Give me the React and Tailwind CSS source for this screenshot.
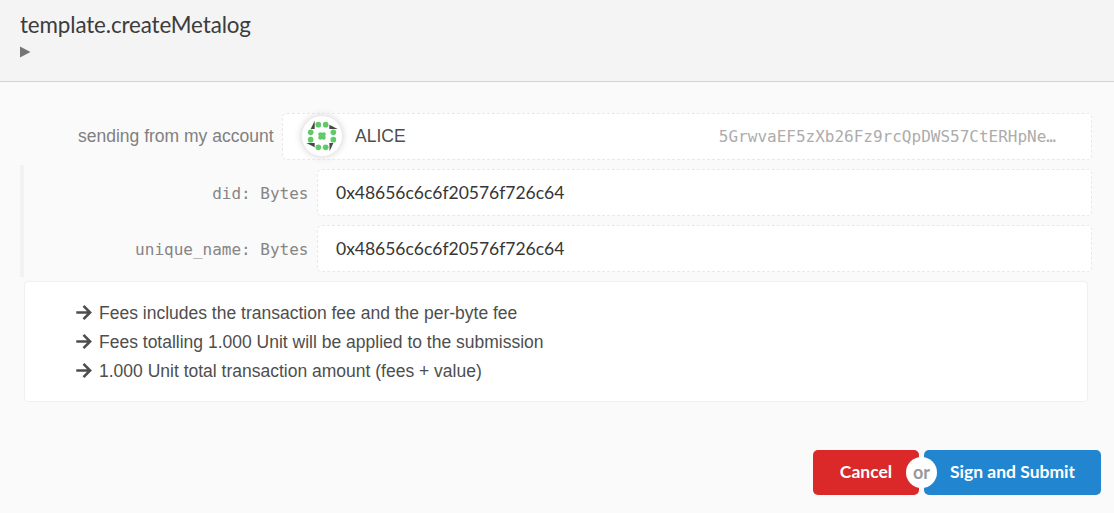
const RING = [[67, 41], [89, 41], [44, 64], [112, 64], [44, 86], [112, 86], [67, 109], [89, 109]];
const CORE = [[73, 70], [83, 70], [73, 80], [83, 80]];

function Identicon() {
  return (
    <div className="mb-px h-10 w-10 shrink-0 rounded-full bg-white shadow-[0_0_6px_2px_#dfdfdf]">
      <svg className="block h-10 w-10" viewBox="18 15 120 120">
        <g fill="#484848">
          <path d="M56 29V54H44Z" />
          <path d="M100 41L125 54H100Z" />
          <path d="M100 96H112L101 121Z" />
          <path d="M31 96H56V109Z" />
        </g>
        <g fill="#5fcb66">
          {RING.map(([x, y]) => <circle key={`${x}-${y}`} cx={x} cy={y} r="8.5" />)}
          {CORE.map(([x, y]) => <circle key={`${x}-${y}`} cx={x} cy={y} r="6.3" />)}
        </g>
      </svg>
    </div>
  );
}

function ParamRow({ label, value }) {
  return (
    <div className="flex h-14 items-start pt-1">
      <div className="mt-[13px] w-[284.5px] whitespace-pre text-right font-['DejaVu_Sans_Mono',monospace] text-[16px] leading-6 text-[#858585]">{label}</div>
      <div className="ml-auto flex h-[47px] w-[775px] items-center rounded-[5px] border border-dashed border-[#e8e8e8] bg-white pl-[18px] pt-[2px] font-[Lato,sans-serif] text-[17.5px] tracking-[-0.02px] text-[#363636]">{value}</div>
    </div>
  );
}

function FeeLine({ children }) {
  return (
    <li className="flex h-[29px] items-center">
      <svg className="mr-[7px] h-4 w-4 shrink-0" viewBox="0 0 16 16" fill="none" stroke="#4e4e4e" strokeWidth="2.6">
        <path d="M0.3 7.5H14M7.5 0.9L14.1 7.5L7.5 14.1" />
      </svg>
      <span className="pt-[2px]">{children}</span>
    </li>
  );
}

export default function App() {
  return (
    <div className="flex h-[513px] w-[1114px] flex-col overflow-hidden bg-[#fafafa] font-['Liberation_Sans',sans-serif] text-[17.5px] text-[#4e4e4e]">
      <header className="h-[82px] shrink-0 border-b border-[#d4d4d5] bg-[#f4f4f4] pl-5 pt-[10px]">
        <h1 className="font-[Lato,sans-serif] text-[22.4px] leading-[29px] tracking-[-0.13px] text-[#3c3c3c]">template.createMetalog</h1>
        <svg className="mt-[7px] block h-3 w-[11px]" viewBox="0 0 11 12"><path d="M0 0.5L10.5 6L0 11.5Z" fill="#757575" /></svg>
      </header>
      <main className="pl-5 pr-[22px] pt-[31px]">
        <div className="flex items-center">
          <div className="w-[253.5px] whitespace-nowrap text-right text-[#808080]">sending from my account</div>
          <div className="ml-auto flex h-[47px] w-[810px] items-center rounded-[5px] border border-dashed border-[#e8e8e8] bg-white pl-[19px] pr-[35px]">
            <Identicon />
            <span className="ml-[13px]">ALICE</span>
            <span className="ml-auto font-['DejaVu_Sans_Mono',monospace] text-[16px] text-[#acacac]">5GrwvaEF5zXb26Fz9rcQpDWS57CtERHpNe…</span>
          </div>
        </div>
        <div className="mt-[5px] border-l-4 border-[#f2f2f2]">
          <ParamRow label="did: Bytes" value="0x48656c6c6f20576f726c64" />
          <ParamRow label="unique_name: Bytes" value="0x48656c6c6f20576f726c64" />
        </div>
        <ul className="ml-1 mr-1 mt-1 h-[121px] rounded-[4px] border border-[#f0f0f0] bg-white pl-[51px] pt-4">
          <FeeLine>Fees includes the transaction fee and the per-byte fee</FeeLine>
          <FeeLine>Fees totalling 1.000 Unit will be applied to the submission</FeeLine>
          <FeeLine>1.000 Unit total transaction amount (fees + value)</FeeLine>
        </ul>
      </main>
      <footer className="mt-12 flex justify-end pr-[13px] font-[Lato,sans-serif] font-bold text-white">
        <button className="h-[45px] w-[106px] rounded-[5px] bg-[#db2828]">Cancel</button>
        <div className="relative w-[5px]">
          <span className="absolute -left-[13px] top-[7px] z-10 flex h-[31px] w-[31px] items-center justify-center rounded-full bg-white pb-px text-[18px] text-[#999999]">or</span>
        </div>
        <button className="h-[45px] w-[177px] rounded-[5px] bg-[#2185d0]">Sign and Submit</button>
      </footer>
    </div>
  );
}
